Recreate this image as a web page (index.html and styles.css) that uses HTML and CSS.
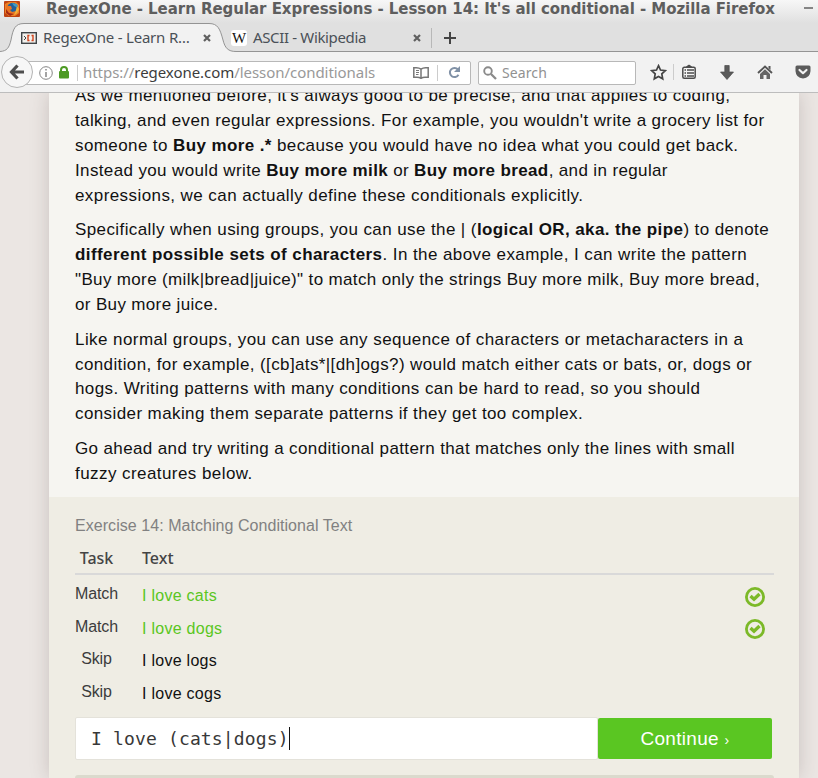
FILE: index.html
```html
<!DOCTYPE html>
<html lang="en">
<head>
<meta charset="utf-8">
<title>RegexOne - Learn Regular Expressions</title>
<link rel="stylesheet" href="styles.css">
</head>
<body>
<header class="titlebar">
  <svg class="fox" width="16" height="16" viewBox="0 0 16 16"><rect width="16" height="16" rx="1" fill="#bf4312"/><path d="M1 3L5 1H12L15 4V12L11 15H5L1 12Z" fill="#ee8425"/><circle cx="8.5" cy="7.3" r="5.5" fill="#23619a"/><path d="M8 2L13 3L14 7L10 5Z" fill="#3f9ac2"/><path d="M2 3L4 5L7 5L8 8L6 9L8 11L12 10L11 13L6 14L2 11Z" fill="#e97423"/><path d="M2 8L5 12L10 13L6 15L2 12Z" fill="#a52a14"/><path d="M13 5L15 8L13 12L10 14L12 9Z" fill="#f4b13b"/></svg>
  <span class="window-title">RegexOne - Learn Regular Expressions - Lesson 14: It's all conditional - Mozilla Firefox</span>
  <span class="minimize"></span>
</header>
<div class="tabs">
  <svg class="tab-shape" width="818" height="30" viewBox="0 0 818 30"><path d="M0 28.5C7 28 9 25 11 17C13 6 15 .5 24 .5H209C218 .5 220 6 223 17C225 25 228 28.5 236 28.5H818V30H0Z" fill="#f2f2f2"/><path d="M0 28.5C7 28 9 25 11 17C13 6 15 .5 24 .5H209C218 .5 220 6 223 17C225 25 228 28.5 236 28.5H818" fill="none" stroke="#949494"/></svg>
  <div class="tab tab-active">
    <svg width="16" height="12" viewBox="0 0 16 12"><rect x=".7" y=".7" width="14.6" height="10.6" fill="#f1f1ed" stroke="#414649" stroke-width="1.4"/><path d="M3 4L5 6L3 8" fill="none" stroke="#444"/><path d="M8.5 3.5H7V8.5H8.5M10.5 3.5H12V8.5H10.5" fill="none" stroke="#d2451e" stroke-width="1.4"/></svg>
    <span class="tab-title t1">RegexOne - Learn R…</span>
    <svg width="8" height="8" viewBox="0 0 8 8"><path d="M1 1L7 7M7 1L1 7" stroke="#606060" stroke-width="2.2"/></svg>
  </div>
  <div class="tab">
    <span class="wiki">W</span>
    <span class="tab-title t2">ASCII - Wikipedia</span>
    <svg width="8" height="8" viewBox="0 0 8 8"><path d="M1 1L7 7M7 1L1 7" stroke="#606060" stroke-width="2.2"/></svg>
  </div>
  <div class="new-tab"><svg width="12" height="12" viewBox="0 0 12 12"><path d="M6 0V12M0 6H12" stroke="#444" stroke-width="2"/></svg></div>
</div>
<nav class="toolbar">
  <div class="back"><svg width="16" height="16" viewBox="0 0 16 16"><path d="M8.5 1.5L2.500 8L8.5 14.5M2.8 8H15" fill="none" stroke="#4e4e4e" stroke-width="3.2"/></svg></div>
  <div class="address">
    <svg width="14" height="14" viewBox="0 0 14 14"><circle cx="7" cy="7" r="6.3" fill="none" stroke="#858585"/><path d="M7 6V11M7 3V4.6" stroke="#858585" stroke-width="1.5"/></svg>
    <svg class="lock" width="10" height="13" viewBox="0 0 10 13"><path d="M2 6V4a3 3 0 0 1 6 0V6" fill="none" stroke="#4d9a24" stroke-width="2"/><rect y="5" width="10" height="7.5" rx="1" fill="#4d9a24"/></svg>
    <i class="rule"></i>
    <span class="url">https://<b>regexone.com</b>/lesson/conditionals</span>
    <svg class="reader" width="16" height="12" viewBox="0 0 16 12"><path d="M8 2.2Q6 .7 3 .8H.8V10.3H4Q6.5 10.3 8 11.3Q9.500 10.3 12 10.3H15.200V.8H13Q10 .7 8 2.200V11" fill="none" stroke="#777" stroke-width="1.5"/><path d="M3 3.500H6M3 5.500H6M3 7.500H5.500" stroke="#777"/></svg>
    <i class="rule r2"></i>
    <svg width="13" height="13" viewBox="0 0 13 13"><path d="M10 3.500A4.600 4.600 0 1 0 10.500 8.800" fill="none" stroke="#8091a6" stroke-width="2"/><path d="M12 0V6H6Z" fill="#8091a6"/></svg>
  </div>
  <div class="search"><svg width="14" height="14" viewBox="0 0 14 14"><circle cx="5" cy="5" r="3.800" fill="none" stroke="#8a8a8a" stroke-width="1.900"/><path d="M8 8L13 13" stroke="#8a8a8a" stroke-width="2.300"/></svg><span>Search</span></div>
  <div class="tools">
    <svg width="17" height="17" viewBox="0 0 17 17"><path d="M8.500 1.700L10.500 6L15.300 6.600L11.800 9.900L12.700 14.800L8.500 12.400L4.300 14.800L5.200 9.900L1.700 6.600L6.500 6Z" fill="none" stroke="#444" stroke-width="1.700"/></svg>
    <i class="rule"></i>
    <svg class="list" width="14" height="16" viewBox="0 0 14 16"><rect x=".8" y="3.300" width="12.400" height="11" rx="1.500" fill="#f6f6f6" stroke="#4c4c4c" stroke-width="1.500"/><path d="M4 3Q4 2 5.200 2Q5.500 .7 7 .7Q8.500 .7 8.800 2Q10 2 10 3Z" fill="#4c4c4c"/><path d="M2.500 6H4M2.500 9H4M2.500 12H4M5 6H12M5 9H12M5 12H12" stroke="#4c4c4c" stroke-width="1.400"/></svg>
    <svg class="down" width="14" height="15" viewBox="0 0 14 15"><path d="M4.800 .5H9.200V7H13.500L7 14.500L.5 7H4.800Z" fill="#5b5b5b" stroke="#4c4c4c" stroke-width=".7"/></svg>
    <svg class="home" width="16" height="15" viewBox="0 0 16 15"><path d="M1 8L8 1.500L15 8" fill="none" stroke="#555" stroke-width="1.900"/><path d="M11.500 1H13.500V5L11.500 3Z" fill="#555"/><path d="M3 9L8 4.300L13 9V14H9.500V10H6.500V14H3Z" fill="#666"/></svg>
    <svg class="pocket" width="16" height="14" viewBox="0 0 16 14"><path d="M2 .5H14Q15.500 .5 15.500 2V6Q15 13 8 13.500Q1 13 .5 6V2Q.5 .5 2 .5Z" fill="#5b5b5b"/><path d="M4.500 5L8 8.200L11.500 5" fill="none" stroke="#f2f2f2" stroke-width="2.200" stroke-linecap="round" stroke-linejoin="round"/></svg>
  </div>
</nav>
<div class="viewport">
<main class="page">
  <article class="lesson">
    <p>
      <span class="l1">As we mentioned before, it's always good to be precise, and that applies to coding,</span>
      <span class="l2">talking, and even regular expressions. For example, you wouldn't write a grocery list for</span>
      <span class="l3">someone to <b>Buy more .*</b> because you would have no idea what you could get back.</span>
      <span class="l4">Instead you would write <b>Buy more milk</b> or <b>Buy more bread</b>, and in regular</span>
      <span class="l5">expressions, we can actually define these conditionals explicitly.</span>
    </p>
    <p>
      <span class="l6">Specifically when using groups, you can use the | (<b>logical OR, aka. the pipe</b>) to denote</span>
      <span class="l7"><b>different possible sets of characters</b>. In the above example, I can write the pattern</span>
      <span class="l8">"Buy more (milk|bread|juice)" to match only the strings Buy more milk, Buy more bread,</span>
      <span class="l9">or Buy more juice.</span>
    </p>
    <p>
      <span class="l10">Like normal groups, you can use any sequence of characters or metacharacters in a</span>
      <span class="l11">condition, for example, ([cb]ats*|[dh]ogs?) would match either cats or bats, or, dogs or</span>
      <span class="l12">hogs. Writing patterns with many conditions can be hard to read, so you should</span>
      <span class="l13">consider making them separate patterns if they get too complex.</span>
    </p>
    <p>
      <span class="l14">Go ahead and try writing a conditional pattern that matches only the lines with small</span>
      <span class="l15">fuzzy creatures below.</span>
    </p>
  </article>
  <section class="exercise">
    <h2>Exercise 14: Matching Conditional Text</h2>
    <div class="row head"><span>Task</span><span>Text</span></div>
    <div class="row"><span>Match</span><span class="ok">I love cats</span><svg width="20" height="20" viewBox="0 0 20 20"><circle cx="10" cy="10" r="8.600" fill="none" stroke="#7cb928" stroke-width="2.800"/><path d="M5.500 9L9 12.300L14.500 7" fill="none" stroke="#7cb928" stroke-width="3.300"/></svg></div>
    <div class="row"><span>Match</span><span class="ok">I love dogs</span><svg width="20" height="20" viewBox="0 0 20 20"><circle cx="10" cy="10" r="8.600" fill="none" stroke="#7cb928" stroke-width="2.800"/><path d="M5.500 9L9 12.300L14.500 7" fill="none" stroke="#7cb928" stroke-width="3.300"/></svg></div>
    <div class="row"><span>Skip</span><span>I love logs</span></div>
    <div class="row"><span>Skip</span><span>I love cogs</span></div>
    <div class="answer"><div class="input"><span>I love (cats|dogs)</span><i class="caret"></i></div><div class="continue">Continue <small>›</small></div></div>
    <div class="next-block"></div>
  </section>
</main>
</div>
</body>
</html>
```
FILE: styles.css
```css
* { box-sizing: border-box; }
body { margin: 0; width: 818px; height: 778px; overflow: hidden; background: #ebe6e3; font-family: "Liberation Sans", Arial, sans-serif; display: flex; flex-direction: column; }
svg { display: block; flex: none; }
span { white-space: nowrap; }
.titlebar { flex: none; height: 23px; background: linear-gradient(#f7f7f7, #e0e0e0); display: flex; align-items: flex-start; padding-left: 4px; }
.fox { margin-top: 1px; }
.window-title { margin-left: 26px; width: 754px; font: bold 15px/17px "DejaVu Sans", sans-serif; letter-spacing: -.045px; color: #5e5e5e; padding-top: 1px; }
.minimize { width: 9px; height: 2px; margin: 7px 0 0 4px; background: #858585; flex: none; }
.tabs { flex: none; height: 30px; background: #e0e0e0; position: relative; display: flex; }
.tab-shape { position: absolute; left: 0; top: 0; }
.tab { position: relative; display: flex; align-items: center; height: 30px; }
.tab-active { padding-left: 21px; width: 231px; }
.tab-title { font: 15px/20px "Noto Sans", sans-serif; color: #4a5057; margin: -2px 0 0 6px; flex: none; }
.t1 { width: 160px; letter-spacing: -.2px; }
.t2 { width: 160px; letter-spacing: -.35px; }
.wiki { width: 16px; height: 16px; border-radius: 3px; background: #fff; font: 15px/16px "Liberation Serif", serif; color: #111; display: flex; justify-content: center; }
.new-tab { position: relative; margin: 5px 0 0 10px; height: 20px; border-left: 1px solid #b8b8b8; padding: 4px 0 0 12px; }
.toolbar { flex: none; height: 40px; background: #f2f2f2; border-bottom: 1px solid #bdbdbd; display: flex; align-items: center; }
.back { position: relative; z-index: 1; width: 32px; height: 32px; margin: -1px 0 0 1px; border: 1px solid #b4b4b4; border-radius: 50%; background: #f7f7f7; display: flex; align-items: center; justify-content: center; flex: none; }
.address { margin-left: -9px; padding-left: 14px; width: 447px; height: 24px; border: 1px solid #b8b8b8; border-radius: 2px; background: #fff; display: flex; align-items: center; flex: none; }
.lock { margin-left: 6px; }
.rule { width: 1px; height: 16px; background: #ccc; flex: none; }
.lock + .rule { margin-left: 8px; }
.url { margin: -2px 0 0 5px; width: 324px; font: 15px/22px "Noto Sans", sans-serif; letter-spacing: -.05px; color: #999; }
.url b { font-weight: 400; color: #3c3c3c; }
.reader { margin-left: 6px; }
.r2 { margin: 0 10px 0 8px; }
.search { margin-left: 7px; width: 158px; height: 24px; border: 1px solid #b8b8b8; border-radius: 2px; background: #fff; display: flex; align-items: center; padding-left: 4px; font: 14px/22px "Noto Sans", sans-serif; color: #919191; flex: none; }
.search span { margin-left: 5px; letter-spacing: .1px; }
.tools { display: flex; align-items: center; margin: -1px 0 0 13.500px; }
.tools .rule { margin-left: 6.500px; }
.list { margin-left: 8px; }
.down { margin-left: 24px; }
.home { margin-left: 23px; }
.pocket { margin-left: 22px; }
.viewport { flex: 1; overflow: hidden; }
.page { width: 750px; height: 685px; margin-left: 49px; background: #efede4; box-shadow: 0 0 18px rgba(80,65,65,.22); }
.lesson { height: 404px; background: #f6f5f1; padding-left: 26px; overflow: hidden; }
.lesson p { margin: 0 0 11px; font-size: 17px; line-height: 25px; color: #111; }
.lesson p:first-child { margin: -10px 0 9px; }
.lesson p:nth-child(n+3) { line-height: 24.500px; }
.lesson span { display: block; letter-spacing: .4px; }
.lesson .l2, .lesson .l11 { letter-spacing: .385px; }
.lesson .l4 { letter-spacing: .365px; }
.lesson .l8 { letter-spacing: .35px; }
.lesson .l9 { letter-spacing: .35px; }
.lesson .l14 { letter-spacing: .37px; }
.lesson .l5, .lesson .l7 { letter-spacing: .42px; }
.lesson .l10, .lesson .l15 { letter-spacing: .435px; }
.exercise { height: 281px; padding: 17px 27px 0 26px; display: flex; flex-direction: column; }
.exercise h2 { margin: 0; font: 16px/24px "Liberation Sans", sans-serif; letter-spacing: .05px; color: #818181; }
.row { display: grid; grid-template-columns: 43px 1fr 28px; column-gap: 24px; height: 32.500px; flex: none; font-size: 16px; line-height: 20px; color: #111; }
.row span:first-child { text-align: center; color: #3c3c3c; padding-top: 6px; letter-spacing: -.1px; }
.row span:nth-child(2) { padding-top: 8px; letter-spacing: .27px; }
.row .ok { color: #5ac622; }
.row svg { margin: 8.500px 0 0 1px; }
.head { width: 699px; height: 37px; margin-bottom: 3px; border-bottom: 2px solid #d9d9d9; }
.row.head span { font: 16px/20px "Noto Sans", sans-serif; font-weight: 500; color: #444; padding-top: 10px; letter-spacing: 0; }
.answer { margin-top: 9px; height: 43px; display: flex; width: 698px; flex: none; }
.input { width: 523px; border: 1px solid #e4e2da; border-radius: 2px; background: #fff; display: flex; align-items: center; padding-left: 15px; font: 18px/24px "DejaVu Sans Mono", monospace; letter-spacing: .15px; color: #383838; }
.caret { width: 1px; height: 23px; background: #111; }
.continue { width: 174px; height: 41px; margin-top: 1px; border-radius: 2px; background: #5ac622; color: #fff; font-size: 19px; line-height: 41px; letter-spacing: .3px; text-align: center; }
.continue small { font-size: 14px; }
.next-block { margin-top: 15px; height: 10px; width: 699px; border-radius: 3px; background: #dbdacd; flex: none; }
```
